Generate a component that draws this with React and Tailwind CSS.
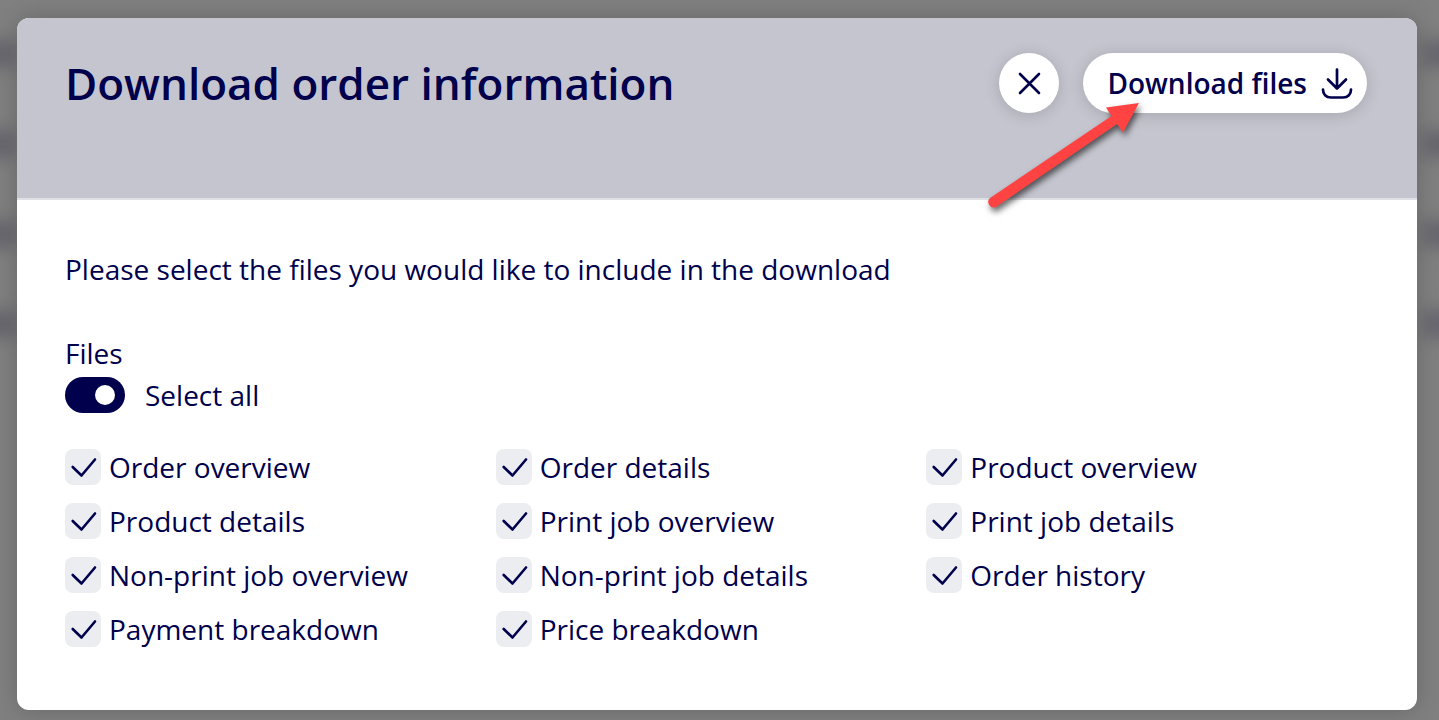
import { useState } from "react";

const FILES = [
  "Order overview",
  "Order details",
  "Product overview",
  "Product details",
  "Print job overview",
  "Print job details",
  "Non-print job overview",
  "Non-print job details",
  "Order history",
  "Payment breakdown",
  "Price breakdown",
];

const CloseIcon = () => (
  <svg
    className="h-6 w-6"
    viewBox="0 0 24 24"
    fill="none"
    stroke="currentColor"
    strokeWidth="2.6"
    strokeLinecap="round"
    aria-hidden="true"
  >
    <path d="M3 3l19 19M22 3L3 22" />
  </svg>
);

const DownloadIcon = () => (
  <svg
    className="h-8 w-8"
    viewBox="0 0 32 32"
    fill="none"
    stroke="currentColor"
    strokeWidth="2.7"
    strokeLinecap="round"
    strokeLinejoin="round"
    aria-hidden="true"
  >
    <path d="M16 2.500v19M7 12.500l9 9 9-9" />
    <path d="M2 22.500c0 5 3 8 8 8h12c5 0 8-3 8-8" />
  </svg>
);

const FileCheckbox = ({ label, checked, onChange }) => (
  <label className="flex items-center gap-2 text-[28px] leading-9">
    <span className="grid shrink-0">
      <input
        type="checkbox"
        checked={checked}
        onChange={onChange}
        className="peer col-start-1 row-start-1 h-9 w-9 appearance-none rounded-lg bg-[#ecedf1]"
      />
      <svg
        className="pointer-events-none invisible col-start-1 row-start-1 h-9 w-9 peer-checked:visible"
        viewBox="0 0 36 36"
        fill="none"
        stroke="currentColor"
        strokeWidth="2.6"
        strokeLinecap="round"
        strokeLinejoin="round"
        aria-hidden="true"
      >
        <path d="M7.700 18l8.800 8.500L30 10.500" />
      </svg>
    </span>
    {label}
  </label>
);

// Blurred rows of the page behind the dialog
const BlurredRows = ({ className }) => (
  <div
    className={`absolute top-10 flex w-20 flex-col gap-[62px] blur-[8px] ${className}`}
    aria-hidden="true"
  >
    <span className="h-7 bg-[#67666e]" />
    <span className="h-7 bg-[#67666e]" />
    <span className="h-7 bg-[#67666e]" />
    <span className="h-7 bg-[#67666e]" />
  </div>
);

const PointerArrow = () => (
  <svg
    className="pointer-events-none absolute top-11 -left-5 h-32 w-44 drop-shadow-[2px_4px_3px_rgba(0,0,0,0.6)]"
    viewBox="0 0 176 128"
    fill="#ff4343"
    aria-hidden="true"
  >
    <path d="M160 6L127 10.500L132.500 19L11 101A5.500 5.500 0 0 0 17 110L138 27L144 35.500Z" />
  </svg>
);

const App = () => {
  const [selected, setSelected] = useState(FILES);
  const allSelected = selected.length === FILES.length;

  const toggleFile = (file) => {
    setSelected((current) =>
      current.includes(file)
        ? current.filter((item) => item !== file)
        : [...current, file]
    );
  };

  return (
    <div className="relative min-h-screen overflow-hidden bg-[#808080] pt-[18px] pr-[22px] pb-[10px] pl-[17px] font-['Open_Sans','Noto_Sans',sans-serif] text-[#00004c]">
      <BlurredRows className="-left-16" />
      <BlurredRows className="-right-16" />

      <div
        role="dialog"
        aria-labelledby="dialog-title"
        className="relative rounded-xl bg-white shadow-[0_0_24px_rgba(0,0,0,0.2)]"
      >
        <header className="flex min-h-[182px] items-start justify-between rounded-t-xl border-b-2 border-[#dfe0e5] bg-[#c5c5cf] pt-[35px] pr-[50px] pl-12">
          <h1
            id="dialog-title"
            className="text-[44px] leading-[60px] font-semibold"
          >
            Download order information
          </h1>
          <div className="relative flex gap-6">
            <button
              type="button"
              aria-label="Close"
              className="flex h-[60px] w-[60px] items-center justify-center rounded-full bg-white shadow-[0_2px_16px_rgba(0,0,0,0.16)]"
            >
              <CloseIcon />
            </button>
            <button
              type="button"
              className="flex h-[60px] items-center gap-[14px] rounded-full bg-white pr-[14px] pl-6 text-[28px] font-semibold shadow-[0_2px_16px_rgba(0,0,0,0.16)]"
            >
              Download files
              <DownloadIcon />
            </button>
            <PointerArrow />
          </div>
        </header>

        <main className="px-12 pt-12 pb-[63px] text-[28px] leading-[42px]">
          <p>Please select the files you would like to include in the download</p>

          <fieldset className="mt-[42px]">
            <legend>Files</legend>
            <label className="flex items-center gap-5">
              <input
                type="checkbox"
                role="switch"
                checked={allSelected}
                onChange={() => setSelected(allSelected ? [] : FILES)}
                className="flex h-9 w-[60px] appearance-none items-center rounded-full bg-[#8a8a9c] px-[10px] before:h-5 before:w-5 before:rounded-full before:bg-white checked:justify-end checked:bg-[#00004c]"
              />
              Select all
            </label>

            <div className="mt-[33px] grid grid-cols-3 gap-y-[18px] pr-3">
              {FILES.map((file) => (
                <FileCheckbox
                  key={file}
                  label={file}
                  checked={selected.includes(file)}
                  onChange={() => toggleFile(file)}
                />
              ))}
            </div>
          </fieldset>
        </main>
      </div>
    </div>
  );
};

export default App;
